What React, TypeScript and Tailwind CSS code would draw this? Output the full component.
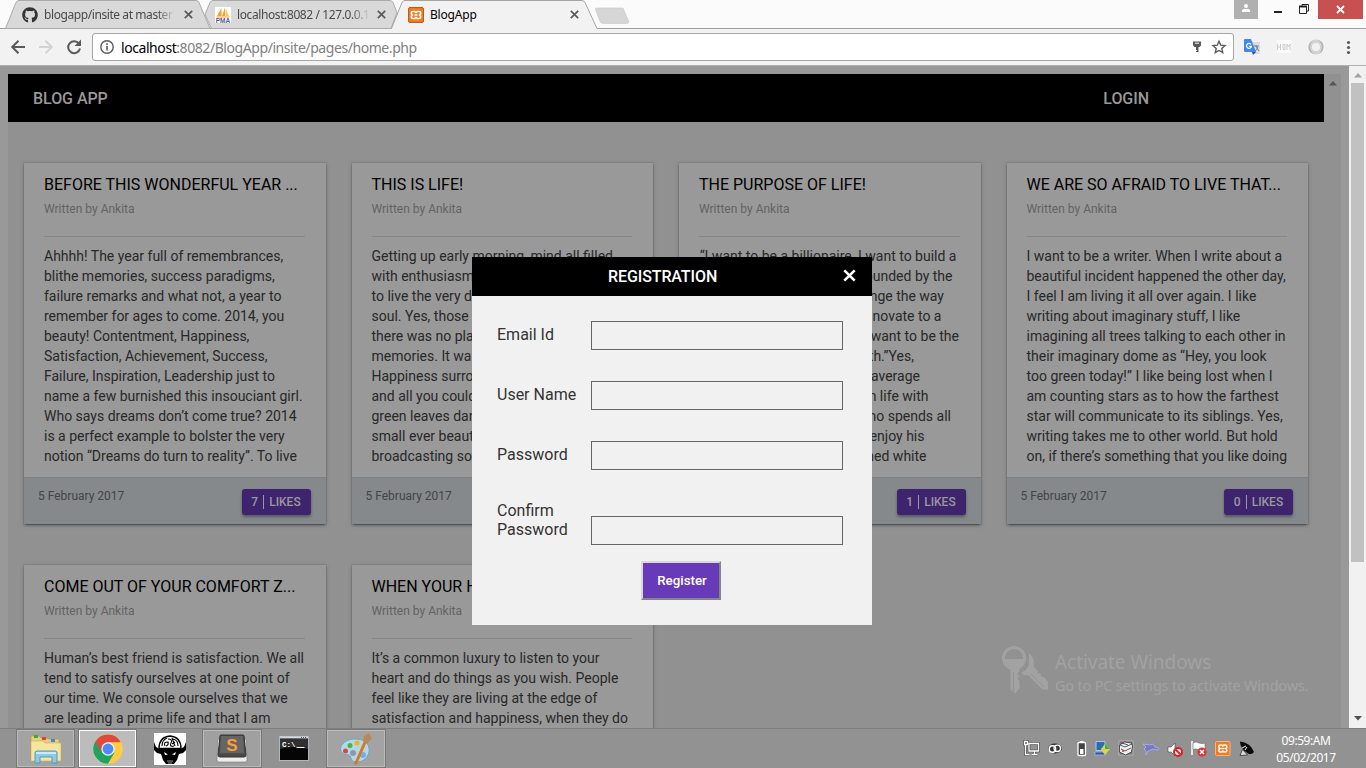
import React from "react";
import { FaGithub } from "react-icons/fa";

type Line = string | { text: string; width: number };
type Post = { title: string; likes: number; lines: Line[] };

const posts: Post[] = [
  {
    title: "BEFORE THIS WONDERFUL YEAR ...",
    likes: 7,
    lines: [
      "Ahhhh! The year full of remembrances,",
      "blithe memories, success paradigms,",
      "failure remarks and what not, a year to",
      "remember for ages to come. 2014, you",
      "beauty! Contentment, Happiness,",
      "Satisfaction, Achievement, Success,",
      "Failure, Inspiration, Leadership just to",
      "name a few burnished this insouciant girl.",
      "Who says dreams don’t come true? 2014",
      "is a perfect example to bolster the very",
      "notion “Dreams do turn to reality”. To live",
    ],
  },
  {
    title: "THIS IS LIFE!",
    likes: 2,
    lines: [
      "Getting up early morning, mind all filled",
      "with enthusiasm and a heart",
      "to live the very day with all",
      "soul. Yes, those were days",
      "there was no place for bad",
      "memories. It was all bliss.",
      "Happiness surrounded us",
      "and all you could see was",
      "green leaves dancing and",
      "small ever beautiful birds",
      "broadcasting songs to all",
    ],
  },
  {
    title: "THE PURPOSE OF LIFE!",
    likes: 1,
    lines: [
      { text: "“I want to be a billionaire, I want to build a", width: 257.5 },
      { text: "big house surrounded by the", width: 253.5 },
      { text: "sea. I will change the way", width: 245 },
      { text: "we live and innovate to a", width: 242.5 },
      { text: "better world. I want to be the", width: 260 },
      { text: "richest on earth.”Yes,", width: 215 },
      { text: "this is how an average", width: 221 },
      { text: "man dreams on life with", width: 229.5 },
      { text: "a person who spends all", width: 252 },
      { text: "his days to enjoy his", width: 225.5 },
      { text: "well earned white", width: 227.5 },
    ],
  },
  {
    title: "WE ARE SO AFRAID TO LIVE THAT...",
    likes: 0,
    lines: [
      "I want to be a writer. When I write about a",
      "beautiful incident happened the other day,",
      "I feel I am living it all over again. I like",
      "writing about imaginary stuff, I like",
      "imagining all trees talking to each other in",
      "their imaginary dome as “Hey, you look",
      "too green today!” I like being lost when I",
      "am counting stars as to how the farthest",
      "star will communicate to its siblings. Yes,",
      "writing takes me to other world. But hold",
      "on, if there’s something that you like doing",
    ],
  },
  {
    title: "COME OUT OF YOUR COMFORT Z...",
    likes: 3,
    lines: [
      "Human’s best friend is satisfaction. We all",
      "tend to satisfy ourselves at one point of",
      "our time. We console ourselves that we",
      "are leading a prime life and that I am",
    ],
  },
  {
    title: "WHEN YOUR HEART SPEAKS",
    likes: 4,
    lines: [
      "It’s a common luxury to listen to your",
      "heart and do things as you wish. People",
      "feel like they are living at the edge of",
      "satisfaction and happiness, when they do",
    ],
  },
];

const Xampp = () => (
  <svg width="16" height="16" viewBox="0 0 16 16" className="shrink-0">
    <rect x=".5" y=".5" width="15" height="15" rx="1.5" fill="#f47a20" stroke="#bb5a1d" />
    <path
      d="M7 4.500H5Q3.300 4.500 3.300 6T4.500 8Q3.300 8.500 3.300 10T5 11.500h2L8 10.300l1 1.200h2q1.700 0 1.700-1.500T11.500 8q1.200-.5 1.200-2T11 4.500H9L8 5.700zM6.500 8h3"
      fill="none"
      stroke="#fff"
      strokeWidth="1.700"
      strokeLinejoin="round"
    />
  </svg>
);

const Pma = () => (
  <svg width="16" height="16" viewBox="0 0 16 16" className="shrink-0">
    <rect width="16" height="16" fill="#fff" />
    <path d="M6.500 1v8H2zM10 .5v8.500H7z" fill="#f5a02a" />
    <path d="M10.500 1.500L14 9h-3.500z" fill="#fbc56b" />
    <path d="M1 9.500h14l-1 1H2z" fill="#f5a02a" />
    <text x="8" y="16" fontSize="6.500" fontWeight="700" textAnchor="middle" fill="#5a5a92" fontFamily="Liberation Sans, sans-serif">
      PMA
    </text>
  </svg>
);

const Close = () => (
  <svg width="9" height="9" viewBox="0 0 9 9" className="shrink-0">
    <path d="M.8.8l7.400 7.400M8.200.8L.8 8.200" stroke="#5a5a5a" strokeWidth="1.700" />
  </svg>
);

function TabStrip() {
  return (
    <div className="relative flex h-[29px] shrink-0 bg-[#fbfbfb] pl-[22px] font-['Noto_Sans','Open_Sans',sans-serif] text-[12px] text-[#4a4a4a]">
      <svg width="1366" height="29" className="absolute left-0 top-0">
        <path d="M0 28.500h1366" stroke="#a0a0a0" />
        <path d="M5.500 28.500L16 2.500Q17 .5 19 .5h177q2 0 3 2l11 26z" fill="#d9d9d9" stroke="#aaa" />
        <path d="M211.500 28.500L205 14.500l5-12Q211 .5 213 .5h177q2 0 3 2l4 10-6 16z" fill="#d9d9d9" stroke="#aaa" />
        <path d="M391.500 29L402 2.500Q403 .5 405 .5h177q2 0 3 2L597 28.500V29z" fill="#f2f2f2" />
        <path d="M391.500 28.500L402 2.500Q403 .5 405 .5h177q2 0 3 2L597 28.500" fill="none" stroke="#a4a4a4" />
        <path d="M597 8h26l5.500 13q.5 2.500-1.500 2.500h-24q-2 0-3-2l-4.500-12q-.5-1.500 1.500-1.500z" fill="#d6d6d6" stroke="#c6c6c6" strokeWidth=".6" />
      </svg>
      <div className="relative flex h-[29px] w-[193px] items-center gap-[6px]">
        <FaGithub size={16} color="#333" className="shrink-0" />
        <span className="w-[131px] overflow-hidden whitespace-nowrap tracking-[-0.42px] [mask-image:linear-gradient(to_right,black_86%,transparent)]">blogapp/insite at master</span>
        <span className="ml-[3px] flex"><Close /></span>
      </div>
      <div className="relative flex h-[29px] w-[193px] items-center gap-[6px]">
        <Pma />
        <span className="w-[133px] overflow-hidden whitespace-nowrap tracking-[-0.4px] [mask-image:linear-gradient(to_right,black_86%,transparent)]">localhost:8082 / 127.0.0.1</span>
        <span className="ml-[1px] flex"><Close /></span>
      </div>
      <div className="relative flex h-[29px] w-[193px] items-center gap-[6px] text-black">
        <Xampp />
        <span className="w-[131px] whitespace-nowrap tracking-[-0.2px]">BlogApp</span>
        <span className="ml-[3px] flex"><Close /></span>
      </div>
      <div className="relative ml-auto flex h-[19px] items-start">
        <div className="flex h-[19px] w-6 justify-center bg-[#b0b0b0]">
          <svg width="10" height="14" viewBox="0 0 10 14">
            <circle cx="5" cy="6" r="2" fill="#fff" />
            <path d="M1 12V10.500Q1 9 3 9h4q2 0 2 1.500V12z" fill="#fff" />
          </svg>
        </div>
        <svg width="60" height="19" viewBox="0 0 60 19">
          <path d="M16 12h8" stroke="#222" strokeWidth="2" />
          <path d="M41.500 6.500h7v7h-7zM44 6V4.500h6.500V11H49" fill="none" stroke="#222" />
          <path d="M41 6.500h8" stroke="#222" strokeWidth="2" />
        </svg>
        <div className="mr-[3px] flex h-[19px] w-[45px] items-center justify-center bg-[#c75050]">
          <svg width="9" height="9" viewBox="0 0 9 9">
            <path d="M1 1l7 7M8 1L1 8" stroke="#fff" strokeWidth="1.800" />
          </svg>
        </div>
      </div>
    </div>
  );
}

function Toolbar() {
  return (
    <div className="flex h-[37px] shrink-0 items-center border-b border-[#b0b0b0] bg-[#f2f2f2] pl-[10px] font-['Noto_Sans','Open_Sans',sans-serif]">
      <svg width="74" height="18" viewBox="0 0 74 18" fill="none" strokeWidth="2">
        <path d="M15 9H2.500M8.500 2.700L2.200 9l6.300 6.300" stroke="#5a5a5a" />
        <path d="M29 9h12.500M35.500 2.700L41.800 9l-6.300 6.300" stroke="#d3d3d3" />
        <path d="M69 5.600A6 6 0 1 0 70 10.600" stroke="#5a5a5a" />
        <path d="M71 1.500v6.500h-6.500z" fill="#5a5a5a" />
      </svg>
      <div className="ml-[8px] flex h-[28px] w-[1142px] shrink-0 items-center rounded-[3px] border border-[#a6a6a6] bg-white pl-[7px] pr-[6px]">
        <svg width="14" height="14" viewBox="0 0 14 14">
          <circle cx="7" cy="7" r="6.200" fill="none" stroke="#5a5a5a" strokeWidth="1.400" />
          <path d="M7 6v4.500M7 3.300v1.600" stroke="#5a5a5a" strokeWidth="1.600" />
        </svg>
        <span className="ml-[7px] whitespace-nowrap text-[14px] tracking-[-0.43px] text-[#808080]">
          <span className="text-black">localhost</span>:8082/BlogApp/insite/pages/home.php
        </span>
        <svg width="36" height="16" viewBox="0 0 36 16" className="ml-auto">
          <path d="M2 2.500h8v4L8.500 8H7.500v5H5V12h1V11H5V8H3.500L2 6.500z" fill="#5a5a5a" />
          <path d="M4 4.200h4" stroke="#fff" />
          <path d="M28 2.200l1.700 4 4.300.4-3.200 2.900.9 4.200-3.700-2.200-3.700 2.200.9-4.200L22 6.600l4.300-.4z" fill="none" stroke="#5a5a5a" strokeWidth="1.400" />
        </svg>
      </div>
      <svg width="128" height="20" viewBox="1234 37 128 20" className="shrink-0">
        <path d="M1250 42h10v12h-8z" fill="#dcdcdc" />
        <path d="M1244 40q0-1 1-1h6l5 13h-11q-1 0-1-1z" fill="#4285f4" />
        <path d="M1252 52h4l-3 3z" fill="#3042b8" />
        <path d="M1251 44.300a2.500 2.500 0 1 0 .5 2h-2.300" fill="none" stroke="#fff" strokeWidth="1.200" />
        <path d="M1253.500 46h5M1256 45v1q2 4 3 5M1258 46.500q-1 4-4 5.500" fill="none" stroke="#678" strokeWidth=".9" />
        <rect x="1277" y="40" width="14" height="13" fill="#fafafa" />
        <path d="M1277.500 44v6M1280.500 44v6M1277 47h4M1283 44.500h2v5h-2zM1287 50v-6l1.500 3 1.500-3v6" fill="none" stroke="#ccc" />
        <circle cx="1316" cy="47" r="5.800" fill="none" stroke="#d2d2d2" strokeWidth="3.400" />
        <path d="M1318 40q5 1 5.500 6t-4.500 8q3-3 3-7t-4-7zM1314 54q-5-1-5.500-6t4.500-8q-3 3-3 7t4 7z" fill="#b4b4b4" />
        <circle cx="1348.500" cy="42.500" r="1.600" fill="#5a5a5a" />
        <circle cx="1348.500" cy="47.500" r="1.600" fill="#5a5a5a" />
        <circle cx="1348.500" cy="52.500" r="1.600" fill="#5a5a5a" />
      </svg>
    </div>
  );
}

function Card({ post }: { post: Post }) {
  return (
    <article className="flex h-[361px] flex-col bg-[#999] text-[#282828] shadow-[0_0_0_1px_rgba(0,0,0,0.07),0_2px_2px_rgba(0,0,0,0.14),0_3px_1px_-2px_rgba(0,0,0,0.2),0_1px_5px_rgba(0,0,0,0.16)]">
      <div className="h-[314px] shrink-0 pl-5 pr-[21px] pt-3">
        <h2 className="whitespace-nowrap text-[16px] leading-5 text-black">{post.title}</h2>
        <p className="mt-[5px] text-[12px] leading-[18px] text-[#636363]">Written by Ankita</p>
        <div className="mt-[18px] h-px bg-[#878787]" />
        <div className="mt-[9px] text-[14px] leading-5">
          {post.lines.map((line, i) =>
            typeof line === "string" ? (
              <p key={i} className="whitespace-nowrap">{line}</p>
            ) : (
              <p key={i} className="whitespace-nowrap text-right" style={{ width: line.width }}>{line.text}</p>
            ),
          )}
        </div>
      </div>
      <footer className="flex h-[47px] shrink-0 items-start justify-between border-t border-[#7c7f82] bg-[#85898c] pl-[14px] pr-[15px]">
        <span className="mt-[9px] text-[12px] leading-[18px] text-[#444]">5 February 2017</span>
        <button className="mt-[11px] flex h-[26px] w-[69px] items-center justify-center rounded-[3px] bg-[#3e236f] text-[12px] font-medium text-[#999] shadow-[0_2px_3px_rgba(0,0,0,0.35)]">
          {post.likes}
          <span className="mx-[5px] h-[14px] w-px bg-[#999]" />
          LIKES
        </button>
      </footer>
    </article>
  );
}

function Watermark() {
  return (
    <div className="absolute left-[1002px] top-[580px] flex whitespace-nowrap font-['Noto_Sans','Open_Sans',sans-serif] text-[#a2a2a2]">
      <svg width="46" height="49" viewBox="0 0 46 49">
        <circle cx="12" cy="12" r="10.500" fill="none" stroke="#a2a2a2" strokeWidth="3" />
        <path d="M1.500 13h21q-1 6-5 8.500V25l-2 3 2 2-2 3 2 2.500V42l-4 5.500-5-4V22q-6-2-7-9z" fill="#a2a2a2" />
        <path d="M27 7q6 5 5 14l4 4-.5 2.500 3 0 .5 3 3 .5L46 36v8l-6-1-14-14q-4 1-7-2 7-3 8-9z" fill="#a2a2a2" />
        <path d="M11.500 26v19M29 28l13 13" stroke="#929292" />
      </svg>
      <div className="ml-[7px] pt-[4px]">
        <p className="text-[19px] leading-[25px] tracking-[-0.05px]">Activate Windows</p>
        <p className="text-[14.500px] leading-[20px] tracking-[-0.2px]">Go to PC settings to activate Windows.</p>
      </div>
    </div>
  );
}

function RegisterModal() {
  const rows = [
    { label: "Email Id", text: "pt-[4px]", input: "" },
    { label: "User Name", text: "pt-[4px]", input: "" },
    { label: "Password", text: "pt-[4px]", input: "" },
    { label: "Confirm Password", text: "", input: "mt-[15px]" },
  ];
  return (
    <section className="absolute left-[472px] top-[191px] flex h-[368px] w-[400px] flex-col bg-[#f1f1f1]">
      <header className="flex h-[39px] items-center bg-black pl-[136px] pr-4 text-[16px] font-medium text-white">
        <h1 className="tracking-[-0.1px]">REGISTRATION</h1>
        <svg width="13" height="13" viewBox="0 0 13 13" className="mb-[3px] ml-auto">
          <path d="M1.300 1.300l10.400 10.400M11.700 1.300L1.300 11.700" stroke="#fff" strokeWidth="2.600" />
        </svg>
      </header>
      <div className="pl-[25px] pt-[25px]">
        {rows.map((r) => (
          <div key={r.label} className="flex h-[60px] items-start">
            <label className={`w-[94px] shrink-0 pr-2 text-[16px] leading-[19px] text-[#333] ${r.text}`}>{r.label}</label>
            <input className={`h-[29px] w-[252px] border border-[#666] bg-transparent ${r.input}`} />
          </div>
        ))}
      </div>
      <button className="ml-[169px] h-[39px] w-[80px] border-2 border-b-[#858585] border-l-[#d8d8d8] border-r-[#858585] border-t-[#d8d8d8] bg-[#673ab7] pl-[2px] text-[13.330px] font-medium text-white">
        Register
      </button>
    </section>
  );
}

function PageView() {
  return (
    <main className="relative flex h-[662px] shrink-0 overflow-hidden bg-[#999] font-['Roboto',sans-serif]">
      <div className="flex w-[1349px] pl-2 pr-2 pt-2">
        <div className="w-[1316px]">
          <header className="flex h-12 items-center justify-between bg-black pl-[25px] pr-[175px] pt-[2px] text-[16px] text-[#999]">
            <span className="font-medium tracking-[-0.05px]">BLOG APP</span>
            <span className="font-medium tracking-[-0.05px]">LOGIN</span>
          </header>
          <div className="grid h-[700px] grid-cols-4 content-start gap-x-[26px] gap-y-[41px] bg-[#919191] px-4 pt-[41px]">
            {posts.map((p) => (
              <Card key={p.title} post={p} />
            ))}
          </div>
        </div>
        <div className="flex w-[17px] justify-center bg-[#919191] pt-[7px]">
          <svg width="8" height="5" viewBox="0 0 8 5">
            <path d="M4 0l4 4.500H0z" fill="#555" />
          </svg>
        </div>
      </div>
      <div className="flex w-[17px] flex-col items-center bg-[#f1f1f1] pt-[7px]">
        <svg width="8" height="5" viewBox="0 0 8 5">
          <path d="M4 0l4 4.500H0z" fill="#a3a3a3" />
        </svg>
        <div className="mt-[5px] h-[479px] w-[13px] bg-[#c1c1c1]" />
        <svg width="8" height="5" viewBox="0 0 8 5" className="mb-[7px] mt-auto">
          <path d="M4 4.500L8 0H0z" fill="#505050" />
        </svg>
      </div>
      <Watermark />
      <RegisterModal />
    </main>
  );
}

const Folder = () => (
  <svg width="34" height="32" viewBox="0 0 34 32">
    <path d="M2 6V3h8l2 2h6l1 1h11v20H2z" fill="#e6cf7c" stroke="#b99a49" strokeWidth=".7" />
    <path d="M5 2h4v3H5z" fill="#2fae45" />
    <path d="M13 4h4v3h-4z" fill="#d9452e" />
    <path d="M22 6h4v3h-4z" fill="#3b86dd" />
    <path d="M2 8h12l2 2h16v18H2z" fill="#f6e59f" stroke="#c9ab56" strokeWidth=".6" />
    <path d="M6 30V20q0-2 2-2h18q2 0 2 2v10h-5v-6H11v6z" fill="#8ec9e8" stroke="#4d9cc5" />
    <path d="M7 20h20" stroke="#dff3fc" strokeWidth="1.500" />
  </svg>
);

const Chrome = () => (
  <svg width="30" height="30" viewBox="0 0 30 30">
    <circle cx="15" cy="15" r="14.700" fill="#ffcd41" />
    <path d="M15 15L2.300 7.600A14.700 14.700 0 0 0 15 29.700L21.400 18.700z" fill="#1ea362" />
    <path d="M2.300 7.600A14.700 14.700 0 0 1 27.800 8.300H15L8.600 18.700z" fill="#dd4b3e" />
    <circle cx="15" cy="15" r="6.700" fill="#f1f1f1" />
    <circle cx="15" cy="15" r="5.400" fill="#4c8bf5" />
  </svg>
);

const Skull = () => (
  <svg width="32" height="32" viewBox="0 0 32 32">
    <rect width="32" height="32" fill="#fff" />
    <path d="M0 9l2 5 4 2h20l4-2 2-5v8l-3 3-4 1-2 6-3 4h-8l-3-4-2-6-4-1-3-3z" fill="#000" />
    <path d="M5 15.500Q5 4 16 3q11 1 11 12.500z" fill="#fff" stroke="#000" strokeWidth="1.300" />
    <path d="M8 13q0-6 5-8M11 13q-2-4 3-4 1 3-2 4M14 6q5 0 3 4t3 3M19 6q5 1 5 7M18 5l3 8M21 9l-3 2" fill="none" stroke="#000" strokeWidth="1.100" />
    <path d="M10 19l4 2.500-3 .5zM22 19l-4 2.500 3 .5z" fill="#fff" />
    <path d="M13 28h6M14 30h4" stroke="#fff" strokeWidth=".6" />
  </svg>
);

const Sublime = () => (
  <svg width="32" height="30" viewBox="0 0 32 30">
    <path d="M2 5h28l1 21q0 2-2 2H3q-2 0-2-2z" fill="#eee" stroke="#777" strokeWidth=".6" />
    <path d="M4 2q0-1 1-1h22q1 0 1 1l2 19q0 2-2 2H4q-2 0-2-2z" fill="#4b4b4b" stroke="#333" />
    <path d="M5 2h22l1 17H4z" fill="#656565" />
    <text x="16" y="16.500" textAnchor="middle" fontSize="17" fontWeight="700" fill="#ff9d38" fontFamily="Liberation Sans, sans-serif">S</text>
  </svg>
);

const Terminal = () => (
  <svg width="30" height="26" viewBox="0 0 30 26">
    <rect x=".5" y=".5" width="29" height="24" fill="#050505" stroke="#b2b5bd" />
    <path d="M1 1.500h28" stroke="#d5d8df" strokeWidth="2" />
    <path d="M22 1.500h5" stroke="#555" strokeDasharray="1 1" />
    <path d="M1 13Q15 9 29 13V3H1z" fill="#303030" />
    <text x="3" y="11" fontSize="7.500" fontWeight="700" fill="#fff" fontFamily="Liberation Mono, monospace">C:\</text>
    <path d="M17.500 11.500h8" stroke="#fff" />
  </svg>
);

const Paint = () => (
  <svg width="34" height="32" viewBox="0 0 34 32">
    <path d="M16 6C4 6-1 15 3 20c3 3 6 0 8 3s1 6 7 6c9 0 13-8 12-14S24 6 16 6z" fill="#b5d7ea" stroke="#6da5c8" />
    <circle cx="6.500" cy="18" r="2.500" fill="#e2462f" />
    <circle cx="11" cy="12.500" r="2.500" fill="#49b641" />
    <circle cx="18" cy="10" r="2.600" fill="#f1b421" />
    <circle cx="14" cy="20" r="3" fill="#899baa" />
    <circle cx="24" cy="22" r="3" fill="#75aee4" />
    <path d="M27 7L17 30" stroke="#d77921" strokeWidth="3" strokeLinecap="round" />
    <path d="M24 8l1-5 5-3 2 4 1 1-5 6z" fill="#b88958" />
  </svg>
);

function Tray() {
  return (
    <svg width="236" height="20" viewBox="1021 739 236 20" fill="none">
      <path d="M1029 743.500h9.500v7.500H1029zM1031.500 754.500h6M1034.500 751v3.500M1024.500 741.500h3v3h-3zM1025.500 745v9.500h4" stroke="#444" strokeWidth="2.600" />
      <path d="M1029 743.500h9.500v7.500H1029zM1031.500 754.500h6M1034.500 751v3.500M1024.500 741.500h3v3h-3zM1025.500 745v9.500h4" stroke="#fff" strokeWidth="1.300" />
      <ellipse cx="1055" cy="748.500" rx="6.800" ry="5" fill="#333" />
      <circle cx="1052.500" cy="749" r="3.200" stroke="#fff" strokeWidth="1.400" />
      <circle cx="1057.300" cy="748.300" r="3.200" stroke="#fff" strokeWidth="1.400" />
      <rect x="1078" y="742.500" width="7.500" height="13" rx="1" fill="#444" stroke="#fff" strokeWidth="1.300" />
      <path d="M1080 741.500h3.500" stroke="#fff" />
      <rect x="1080" y="749" width="3.500" height="5" fill="#fff" />
      <path d="M1096 741.500h9v9h-9z" fill="#2f69b5" stroke="#a8c9ed" />
      <path d="M1095 752h10l1 3h-11z" fill="#315ca2" stroke="#bad1ee" strokeWidth=".6" />
      <path d="M1105 744l5 5-5 6-4-6z" fill="#cddc50" />
      <path d="M1105 744l5 5h-5z" fill="#42ac47" />
      <path d="M1105 755l-4-6h4z" fill="#f6c344" />
      <rect x="1119" y="741" width="14" height="14" fill="#777" stroke="#ccc" strokeWidth=".6" />
      <path d="M1119.500 745l5-3 7 1 1 3-1 6-6 3-6-3z" fill="#eee" stroke="#333" strokeWidth=".8" />
      <path d="M1120 745l5 2 7-3M1122 743l6 2M1121 749l4 2 6-3" stroke="#333" strokeWidth=".8" />
      <circle cx="1123" cy="751" r="1" fill="#d32" />
      <path d="M1143 744l7 1 3-1 2 3 4 1-1 2-5-1-5 2-2 4 0-4-2-2 2-2z" fill="#7278ca" stroke="#b0b5ed" strokeWidth=".8" />
      <path d="M1168 747h3l4-4v13l-4-4h-3z" fill="#fff" stroke="#444" strokeWidth=".6" />
      <circle cx="1178" cy="752" r="4" fill="#fff" stroke="#e02020" strokeWidth="2" />
      <path d="M1175.500 749.500l5 5" stroke="#e02020" strokeWidth="2" />
      <path d="M1192 741v14" stroke="#fff" strokeWidth="1.500" />
      <path d="M1193 743q3-2 6 0 3 1 6 0v7q-4 1-7-.5-3-1-5 0z" fill="#fff" stroke="#555" strokeWidth=".5" />
      <circle cx="1202" cy="752" r="4.500" fill="#d83434" />
      <path d="M1200 750l4 4M1204 750l-4 4" stroke="#fff" strokeWidth="1.500" />
      <rect x="1215.500" y="741.500" width="14.500" height="14" rx="1" fill="#f47a20" stroke="#ffb27a" />
      <path d="M1221.800 745h-1.500q-1.500 0-1.500 1.500t1 2q-1 .5-1 2t1.500 1.500h1.500l1-1 1 1h1.500q1.500 0 1.500-1.500t-1-2q1-.5 1-2t-1.500-1.500h-1.500l-1 1zM1221.300 748.500h3" stroke="#fff" strokeWidth="1.500" />
      <path d="M1240 741.500q10 1 14 10.500-2 3-6 1.500-8-5-8-12z" fill="#0a0a0a" />
      <path d="M1240 755.500l2.500-6 5 5.500z" fill="#ddd" stroke="#222" strokeWidth=".7" />
      <path d="M1242 748l4-2M1245 750l2-3" stroke="#eee" />
    </svg>
  );
}

function Taskbar() {
  const apps = [
    { icon: <Folder />, box: "w-[59px] border-[#777] bg-[#a3a3a3] shadow-[inset_0_0_0_1px_#bababa]" },
    { icon: <Chrome />, box: "ml-[3px] w-[59px] border-[#777] bg-[#bcbcbc] shadow-[inset_0_0_0_1px_#fff]" },
    { icon: <Skull />, box: "ml-[3px] w-[60px] border-transparent" },
    { icon: <Sublime />, box: "ml-[2px] w-[60px] border-[#777] bg-[#a0a0a0] shadow-[inset_0_0_0_1px_#bababa]" },
    { icon: <Terminal />, box: "ml-[2px] w-[60px] border-transparent" },
    { icon: <Paint />, box: "ml-[2px] w-[60px] border-[#777] bg-[#a3a3a3] shadow-[inset_0_0_0_1px_#bababa]" },
  ];
  return (
    <div className="flex h-10 shrink-0 border-t border-[#7d7d7d] bg-[#929292] pl-[16px] font-['Noto_Sans','Open_Sans',sans-serif]">
      {apps.map((a, i) => (
        <div key={i} className={`flex h-[39px] items-center justify-center border ${a.box}`}>{a.icon}</div>
      ))}
      <div className="ml-auto mt-[10px]"><Tray /></div>
      <div className="ml-[4px] mr-[15px] w-[90px] pt-[3px] text-center text-[12px] leading-[17px] tracking-[-0.45px] text-white">
        <p>09:59:AM</p>
        <p>05/02/2017</p>
      </div>
    </div>
  );
}

export default function App() {
  return (
    <div className="flex h-[768px] w-[1366px] flex-col overflow-hidden">
      <TabStrip />
      <Toolbar />
      <PageView />
      <Taskbar />
    </div>
  );
}
